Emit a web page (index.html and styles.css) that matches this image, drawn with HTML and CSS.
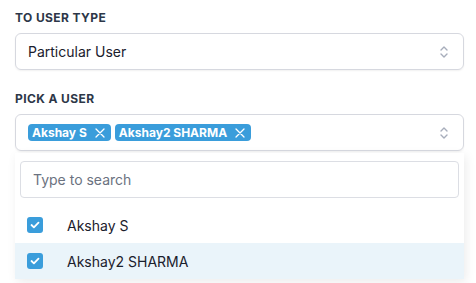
FILE: index.html
```html
<!DOCTYPE html>
<html lang="en">
<head>
    <meta charset="UTF-8">
    <title>Pick a user</title>
    <link rel="stylesheet" href="styles.css">
</head>
<body>
    <div class="field">
        <label class="field-label">To user type</label>
        <div class="select">
            <span>Particular User</span>
            <svg class="chevrons" width="10" height="14" viewBox="0 0 10 14"><path d="M2 5l3-3 3 3M2 9l3 3 3-3" fill="none" stroke="#a7adbb" stroke-width="1.4" stroke-linecap="round" stroke-linejoin="round"/></svg>
        </div>
    </div>

    <div class="field">
        <label class="field-label">Pick a user</label>
        <div class="select multi">
            <div class="tags">
                <span class="tag">Akshay S <svg class="tag-x" width="10" height="10" viewBox="0 0 10 10"><path d="M1 1l8 8M9 1l-8 8" stroke="#fff" stroke-width="1.3" stroke-linecap="round"/></svg></span>
                <span class="tag">Akshay2 SHARMA <svg class="tag-x" width="10" height="10" viewBox="0 0 10 10"><path d="M1 1l8 8M9 1l-8 8" stroke="#fff" stroke-width="1.3" stroke-linecap="round"/></svg></span>
            </div>
            <svg class="chevrons" width="10" height="14" viewBox="0 0 10 14"><path d="M2 5l3-3 3 3M2 9l3 3 3-3" fill="none" stroke="#a7adbb" stroke-width="1.4" stroke-linecap="round" stroke-linejoin="round"/></svg>
        </div>
        <div class="dropdown">
            <input class="search" type="text" placeholder="Type to search">
            <ul class="options">
                <li class="option">
                    <span class="check"><svg width="10" height="8" viewBox="0 0 10 8"><path d="M1.5 4l2.4 2.3L8.5 1.6" fill="none" stroke="#fff" stroke-width="1.8" stroke-linecap="round" stroke-linejoin="round"/></svg></span>
                    Akshay S
                </li>
                <li class="option active">
                    <span class="check"><svg width="10" height="8" viewBox="0 0 10 8"><path d="M1.5 4l2.4 2.3L8.5 1.6" fill="none" stroke="#fff" stroke-width="1.8" stroke-linecap="round" stroke-linejoin="round"/></svg></span>
                    Akshay2 SHARMA
                </li>
            </ul>
        </div>
    </div>
</body>
</html>
```

FILE: styles.css
```css
html { overflow: hidden; }
body { margin: 0; padding: 11px 12px 0 15px; font-family: Inter, "Noto Sans", sans-serif; background: #fff; color: #1a202c; }
.field { margin-bottom: 22px; }
.field-label { display: block; font-size: 12px; font-weight: 700; letter-spacing: 0.4px; text-transform: uppercase; color: #2d3748; line-height: 14px; margin-bottom: 8px; }
.select { height: 37px; box-sizing: border-box; border: 1px solid #d6d8df; border-radius: 6px; display: flex; align-items: center; justify-content: space-between; padding: 0 14px 0 12px; font-size: 14px; box-shadow: 0 1px 2px rgba(0,0,0,0.06); }
.chevrons { display: block; }
.tags { display: flex; gap: 4px; }
.tag { background: #3a9ddb; color: #fff; font-size: 12px; font-weight: 700; height: 17px; line-height: 17px; border-radius: 4px; padding: 0 6px 0 4px; display: flex; align-items: center; }
.tag-x { display: block; margin-left: 8px; }
.dropdown { margin-top: 2px; background: #fff; box-shadow: 2px 3px 10px rgba(0,0,0,0.08); padding: 8px 5px 0 5px; }
.search { width: 100%; box-sizing: border-box; height: 37px; border: 1px solid #dcdee4; border-radius: 4px; padding: 0 12px; font-family: inherit; font-size: 14px; outline: none; display: block; }
.search::placeholder { color: #6b7280; }
.options { list-style: none; margin: 9px -5px 0; padding: 0; }
.option { height: 36px; display: flex; align-items: center; padding-left: 12px; font-size: 14px; color: #1a202c; }
.option.active { background: #eaf4fa; }
.check { width: 16px; height: 16px; border-radius: 3px; background: #3a9ddb; display: flex; align-items: center; justify-content: center; margin-right: 24px; }
```
